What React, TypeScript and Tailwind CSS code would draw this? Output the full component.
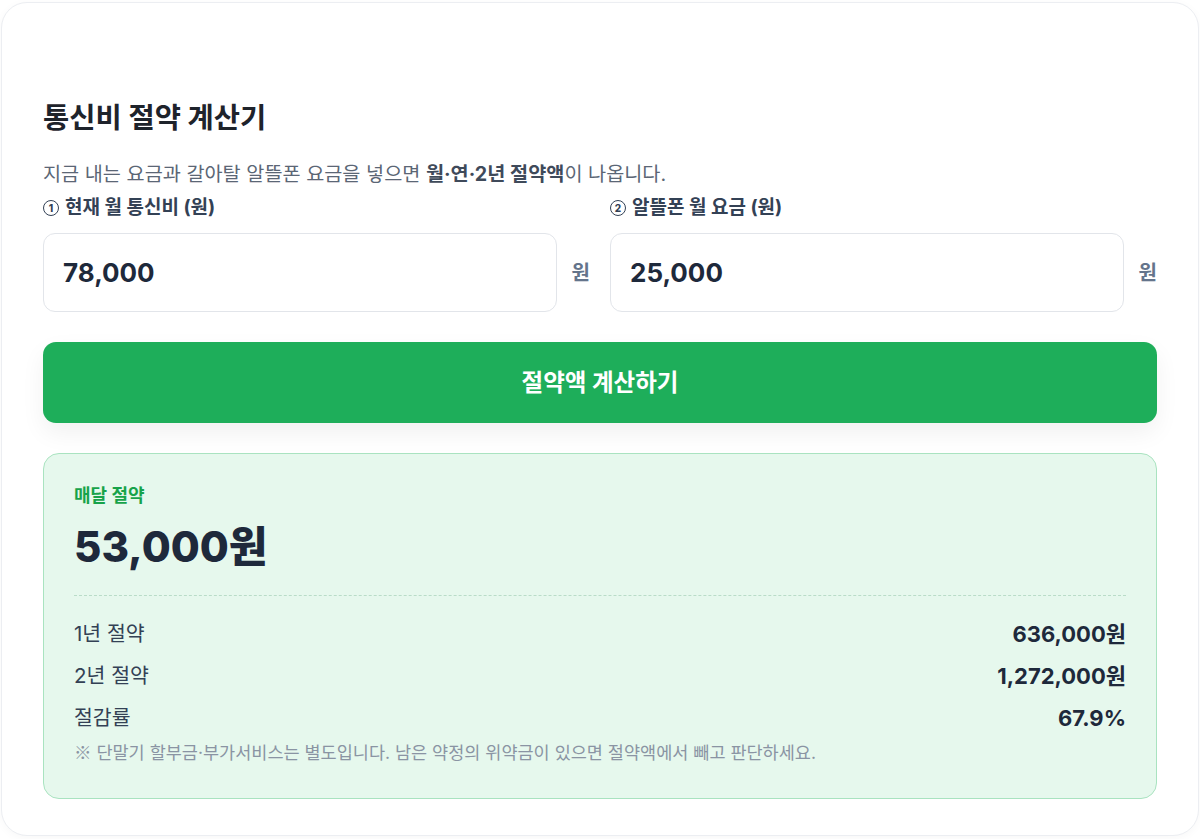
import React from "react";

const font = { fontFamily: 'Inter, "Noto Sans CJK KR", sans-serif' };

function Field({ num, label, value }: { num: string; label: string; value: string }) {
  return (
    <div className="flex flex-col">
      <div className="h-[24px] flex items-center gap-[6px] text-[19px] leading-[24px] font-bold text-[#334155] whitespace-nowrap">
        <span className="inline-flex items-center justify-center w-[16px] h-[16px] rounded-full border-[1.8px] border-[#334155] text-[10px] leading-none font-extrabold">{num}</span>
        <span>{label}</span>
      </div>
      <div className="mt-[13px] flex items-center gap-[15px]">
        <div className="flex-1 h-[79px] rounded-[12px] border border-[#e2e5ea] bg-white flex items-center pl-[19px]">
          <span className="text-[26px] font-bold text-[#1e293b]">{value}</span>
        </div>
        <span className="text-[20px] font-bold text-[#64748b]">원</span>
      </div>
    </div>
  );
}

function Row({ label, value }: { label: string; value: string }) {
  return (
    <div className="flex items-center justify-between h-[26px]">
      <span className="text-[20.5px] text-[#334155]">{label}</span>
      <span className="text-[22px] font-bold text-[#1e293b]">{value}</span>
    </div>
  );
}

export default function App() {
  return (
    <div style={font} className="bg-white w-[1200px] h-[839px] pt-[2px] px-[1px]">
      <div className="h-[834px] rounded-[26px] border border-[#eceef2] bg-white shadow-[0_2px_10px_rgba(0,0,0,0.03)] px-[41px] pt-[97px]">
        <h1 className="text-[28.5px] leading-[36px] font-bold text-[#1e232b]">통신비 절약 계산기</h1>
        <p className="mt-[25px] text-[19.7px] leading-[26px] text-[#5b6675] whitespace-nowrap">
          지금 내는 요금과 갈아탈 알뜰폰 요금을 넣으면 <b className="font-bold text-[#3f4a5a]">월·연·2년 절약액</b>이 나옵니다.
        </p>
        <div className="mt-[9px] grid grid-cols-2 gap-[20px]">
          <Field num="1" label="현재 월 통신비 (원)" value="78,000" />
          <Field num="2" label="알뜰폰 월 요금 (원)" value="25,000" />
        </div>
        <button className="mt-[30px] w-full h-[81px] rounded-[13px] bg-[#1eae5a] text-white text-[23.5px] font-bold shadow-[0_10px_24px_rgba(0,0,0,0.06)]">
          절약액 계산하기
        </button>
        <div className="mt-[30px] rounded-[16px] border border-[#a9e3c0] bg-[#e6f8ed] px-[30px] pt-[31px] pb-[34px]">
          <div className="text-[18px] leading-[22px] font-bold text-[#17a34a]">매달 절약</div>
          <div className="mt-[16px] text-[42px] leading-[48px] font-extrabold text-[#1e293b]">53,000원</div>
          <div className="mt-[24px] border-t border-dashed border-[#b9dcc8]" />
          <div className="mt-[25px] flex flex-col gap-[16px]">
            <Row label="1년 절약" value="636,000원" />
            <Row label="2년 절약" value="1,272,000원" />
            <Row label="절감률" value="67.9%" />
          </div>
          <p className="mt-[10px] text-[17.5px] leading-[22px] text-[#8a94a3] whitespace-nowrap">
            <span style={{ fontFamily: '"Noto Sans CJK KR", sans-serif' }}>※</span> 단말기 할부금·부가서비스는 별도입니다. 남은 약정의 위약금이 있으면 절약액에서 빼고 판단하세요.
          </p>
        </div>
      </div>
    </div>
  );
}
